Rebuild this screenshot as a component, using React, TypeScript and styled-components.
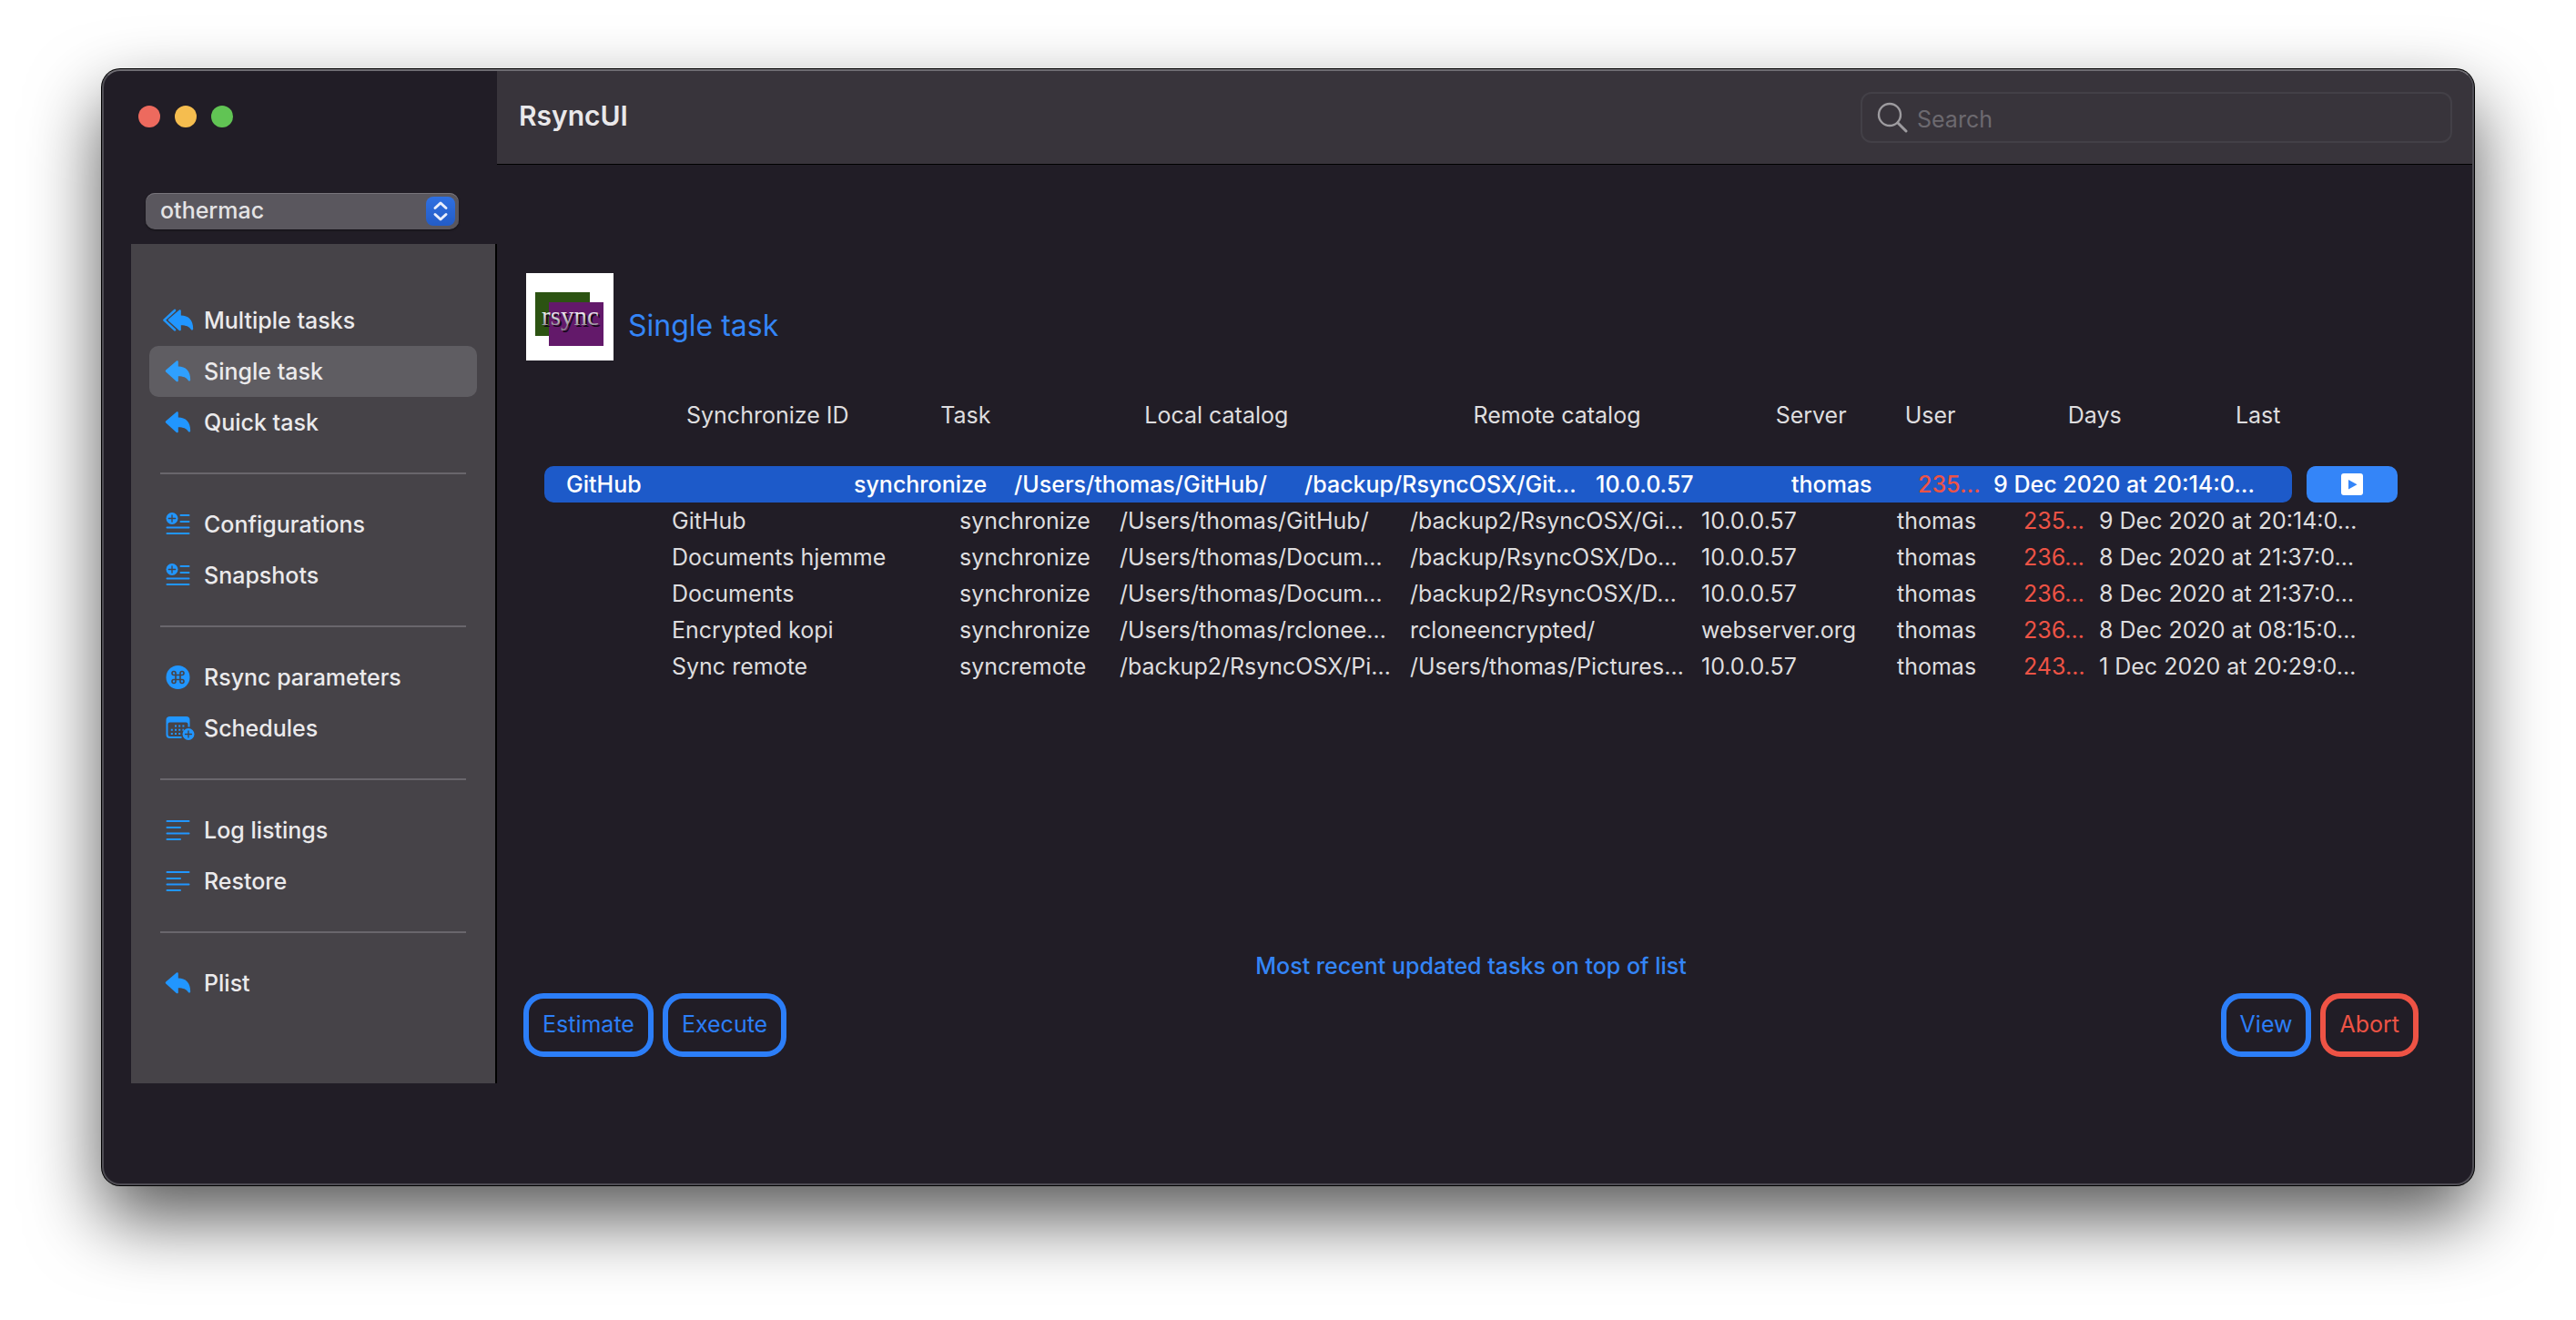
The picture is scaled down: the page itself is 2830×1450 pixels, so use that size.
import React from "react";
import styled, { createGlobalStyle, css } from "styled-components";

const GlobalStyle = createGlobalStyle`
  * { box-sizing: border-box; }
  body {
    margin: 0;
    background: #fff;
    font-family: Inter, "Liberation Sans", sans-serif;
    font-size: 25px;
    line-height: 32px;
    color: #dedddf;
  }
  button, input, select { font: inherit; color: inherit; }
`;

const Desktop = styled.div`
  display: flex;
  min-height: 100vh;
  padding: 76px 112px 148px;
`;

const Window = styled.div`
  flex: 1;
  min-width: 0;
  display: flex;
  background: #211d26;
  border: 2px solid #4f4d54;
  border-top-color: #6f6d73;
  border-radius: 20px;
  box-shadow: 0 0 0 1px #000, 0 36px 80px rgba(0, 0, 0, 0.66);
  overflow: hidden;
`;

const Sidebar = styled.aside`
  flex: none;
  width: 432px;
  display: flex;
  flex-direction: column;
  padding: 38px 0 110px 30px;
  font-weight: 500;
`;

const TrafficLights = styled.div`
  display: flex;
  gap: 16px;
  padding-left: 8px;
`;

const Light = styled.button<{ $color: string }>`
  width: 24px;
  height: 24px;
  padding: 0;
  border: 0;
  border-radius: 50%;
  background: ${(p) => p.$color};
`;

const ProfilePicker = styled.label`
  position: relative;
  display: block;
  margin: 72px 42px 16px 16px;
`;

const ProfileSelect = styled.select`
  appearance: none;
  display: block;
  width: 100%;
  height: 40px;
  padding: 0 40px 2px 16px;
  border: 0;
  border-radius: 10px;
  background: #5a575e;
  box-shadow: inset 0 1px 0 #77747b, 0 1px 2px rgba(0, 0, 0, 0.5);
  color: #e4e3e5;
`;

const PickerArrows = styled.span`
  position: absolute;
  top: 4px;
  right: 4px;
  width: 32px;
  height: 32px;
  border-radius: 8px;
  background: linear-gradient(#2f70e2, #235cc6);
  pointer-events: none;
  svg { display: block; }
`;

const Nav = styled.nav`
  flex: 1;
  padding: 56px 20px;
  background: #464348;
  border-right: 2px solid #000;
`;

const NavItem = styled.a<{ $selected?: boolean }>`
  display: flex;
  align-items: center;
  gap: 7px;
  height: 56px;
  padding-left: 10px;
  border-radius: 10px;
  color: #ebeaec;
  text-decoration: none;
  background: ${(p) => (p.$selected ? "#5f5d62" : "transparent")};
  svg { flex: none; color: ${(p) => (p.$selected ? "#2fa0ff" : "#2196ff")}; }
`;

const Divider = styled.hr`
  height: 2px;
  margin: 27px 12px;
  border: 0;
  background: #69666c;
`;

const Main = styled.main`
  flex: 1;
  min-width: 0;
  display: flex;
  flex-direction: column;
`;

const Toolbar = styled.header`
  display: flex;
  align-items: center;
  justify-content: space-between;
  height: 103px;
  padding: 0 22px 0 24px;
  background: #38343b;
  border-bottom: 1px solid #000;
`;

const AppTitle = styled.h1`
  margin: 0;
  padding-bottom: 4px;
  font-size: 30px;
  line-height: 36px;
  font-weight: 600;
  color: #e9e8ea;
`;

const SearchBox = styled.label`
  flex: 0 1 650px;
  display: flex;
  align-items: center;
  gap: 10px;
  height: 56px;
  padding: 0 16px;
  border: 2px solid #434047;
  border-radius: 12px;
  svg { flex: none; }
`;

const SearchInput = styled.input.attrs({ type: "search" })`
  flex: 1;
  min-width: 0;
  padding: 4px 0 0;
  border: 0;
  outline: 0;
  background: none;
  appearance: none;
  &::placeholder { color: #6c696f; opacity: 1; }
`;

const Content = styled.section`
  flex: 1;
  display: flex;
  flex-direction: column;
  padding: 119px 62px 139px 32px;
`;

const TaskHeading = styled.div`
  display: flex;
  align-items: center;
  gap: 16px;
`;

const TaskTitle = styled.h2`
  margin: 20px 0 0;
  font-size: 32px;
  line-height: 40px;
  font-weight: 400;
  color: #3485f7;
`;

const TaskTable = styled.table`
  display: block;
  margin: 44px 20px 0;
  white-space: nowrap;
  thead, tbody { display: block; }
`;

const HeadRow = styled.tr`
  display: grid;
  grid-template-columns: 279fr 224fr 361fr 332fr 142fr 179fr 184fr 178fr;
  padding-left: 156px;
  margin-bottom: 40px;
`;

const HeadCell = styled.th`
  min-width: 0;
  padding: 0;
  font-weight: 400;
  text-align: left;
`;

const taskColumns = "340fr 176fr 319fr 320fr 215fr 139fr 83fr 328fr";

const Cell = styled.td<{ $overdue?: boolean }>`
  min-width: 0;
  padding: 0;
  line-height: 40px;
  color: ${(p) => (p.$overdue ? "#ee5345" : "inherit")};
  &:first-child { padding-left: 24px; }
`;

const ActionCell = styled.td`
  padding: 0 0 0 16px;
`;

const TaskRow = styled.tr<{ $selected?: boolean }>`
  display: grid;
  height: 40px;
  grid-template-columns: ${taskColumns};
  padding-left: 116px;
  ${(p) => p.$selected && css`
    grid-template-columns: ${taskColumns} 116px;
    padding-left: 0;
    font-weight: 500;
    color: #fff;
    ${Cell} { background: #1d5ac9; }
    ${Cell}:first-child { border-radius: 10px 0 0 10px; }
    ${Cell}:nth-child(8) { border-radius: 0 10px 10px 0; }
  `}
`;

const PlayButton = styled.button`
  display: flex;
  align-items: center;
  justify-content: center;
  width: 100px;
  height: 40px;
  padding: 0;
  border: 0;
  border-radius: 10px;
  background: #3485f8;
`;

const Hint = styled.p`
  margin: auto 0 14px;
  font-weight: 500;
  text-align: center;
  color: #3485f7;
`;

const Actions = styled.div`
  display: flex;
  gap: 10px;
  margin: 0 -3px;
`;

const ActionButton = styled.button<{ $danger?: boolean; $push?: boolean }>`
  height: 70px;
  padding: 0 15px 2px;
  border: 6px solid;
  border-radius: 22px;
  background: none;
  color: ${(p) => (p.$danger ? "#ee5345" : "#2c7ef8")};
  ${(p) => p.$push && css`margin-left: auto;`}
`;

const HEAD = ["Synchronize ID", "Task", "Local catalog", "Remote catalog", "Server", "User", "Days", "Last"];

const TASKS = [
  ["GitHub", "synchronize", "/Users/thomas/GitHub/", "/backup/RsyncOSX/Git…", "10.0.0.57", "thomas", "235…", "9 Dec 2020 at 20:14:0…"],
  ["GitHub", "synchronize", "/Users/thomas/GitHub/", "/backup2/RsyncOSX/Gi…", "10.0.0.57", "thomas", "235…", "9 Dec 2020 at 20:14:0…"],
  ["Documents hjemme", "synchronize", "/Users/thomas/Docum…", "/backup/RsyncOSX/Do…", "10.0.0.57", "thomas", "236…", "8 Dec 2020 at 21:37:0…"],
  ["Documents", "synchronize", "/Users/thomas/Docum…", "/backup2/RsyncOSX/D…", "10.0.0.57", "thomas", "236…", "8 Dec 2020 at 21:37:0…"],
  ["Encrypted kopi", "synchronize", "/Users/thomas/rclonee…", "rcloneencrypted/", "webserver.org", "thomas", "236…", "8 Dec 2020 at 08:15:0…"],
  ["Sync remote", "syncremote", "/backup2/RsyncOSX/Pi…", "/Users/thomas/Pictures…", "10.0.0.57", "thomas", "243…", "1 Dec 2020 at 20:29:0…"],
];

type IconName = "reply" | "replyAll" | "listPlus" | "command" | "calendar" | "lines";

const REPLY =
  "M16.4 6.6c.7-.7 1.9-.2 1.9.8v5.1c8.2.3 13.4 4.6 13.4 14.7 0 1.4-1.6 1.8-2.3.8-2.4-3.5-5.4-4.7-11.1-4.8v5c0 1.1-1.2 1.5-2 .8L4.7 18.4c-.6-.5-.6-1.3 0-1.8z";

function Icon({ name }: { name: IconName }) {
  return (
    <svg width="43" height="36" viewBox="0 0 43 36" fill="currentColor" aria-hidden="true">
      {name === "reply" && <path transform="translate(3.5 0)" d={REPLY} />}
      {name === "replyAll" && (
        <>
          <path transform="translate(6.5 0)" d={REPLY} />
          <path d="M18 7 6.4 17.6 18 28.4" fill="none" stroke="currentColor" strokeWidth="2.6" strokeLinecap="round" strokeLinejoin="round" />
        </>
      )}
      {name === "listPlus" && (
        <>
          <circle cx="15" cy="11.5" r="6.5" />
          <path d="M15 7.8v7.4M11.3 11.5h7.4" stroke="#464348" strokeWidth="1.3" strokeLinecap="round" />
          <path d="M24.5 8h9M24.5 15h9M9.5 21.5h24M9.5 28h24" stroke="currentColor" strokeWidth="2" strokeLinecap="round" />
        </>
      )}
      {name === "command" && (
        <>
          <circle cx="21.5" cy="18" r="13" />
          <path
            d="M19 15.5h5v5h-5zM19 15.5h-2a2 2 0 1 1 2-2zM24 15.5v-2a2 2 0 1 1 2 2zM24 20.5h2a2 2 0 1 1-2 2zM19 20.5v2a2 2 0 1 1-2-2z"
            fill="none" stroke="#464348" strokeWidth="1.6"
          />
        </>
      )}
      {name === "calendar" && (
        <>
          <path d="M12 5h18.5a4 4 0 0 1 4 4v7.500h-2V13.5a2 2 0 0 0-2-2H12.5a2 2 0 0 0-2 2V24.5a2.500 2.500 0 0 0 2.500 2.500H25.5v2H12.500a4 4 0 0 1-4-4V9a4 4 0 0 1 3.500-4z" />
          <path d="M18 14.5h2v2h-2zM22.2 14.5h2v2h-2zM26.4 14.5h2v2h-2zM13.8 18.7h2v2h-2zM18 18.7h2v2h-2zM22.2 18.7h2v2h-2zM26.4 18.7h1.5v2h-1.500zM13.8 22.9h2v2h-2zM18 22.9h2v2h-2zM22.2 22.9h2v2h-2z" />
          <circle cx="33" cy="24.5" r="6.5" />
          <path d="M33 21v7M29.5 24.5h7" stroke="#464348" strokeWidth="1.3" strokeLinecap="round" />
        </>
      )}
      {name === "lines" && (
        <path d="M9.5 8h24M9.5 15h14.5M9.5 21.5h24M9.5 28h14.5" stroke="currentColor" strokeWidth="2" strokeLinecap="round" />
      )}
    </svg>
  );
}

const NAV: { icon: IconName; label: string; selected?: boolean }[][] = [
  [
    { icon: "replyAll", label: "Multiple tasks" },
    { icon: "reply", label: "Single task", selected: true },
    { icon: "reply", label: "Quick task" },
  ],
  [
    { icon: "listPlus", label: "Configurations" },
    { icon: "listPlus", label: "Snapshots" },
  ],
  [
    { icon: "command", label: "Rsync parameters" },
    { icon: "calendar", label: "Schedules" },
  ],
  [
    { icon: "lines", label: "Log listings" },
    { icon: "lines", label: "Restore" },
  ],
  [{ icon: "reply", label: "Plist" }],
];

function RsyncLogo() {
  return (
    <svg width="96" height="96" viewBox="0 0 96 96" role="img" aria-label="rsync">
      <defs>
        <linearGradient id="metal" x1="0" y1="0" x2="0" y2="1">
          <stop offset="0.3" stopColor="#ffffff" />
          <stop offset="0.9" stopColor="#8c8490" />
        </linearGradient>
      </defs>
      <rect width="96" height="96" fill="#fff" />
      <rect x="10" y="21" width="60" height="48" fill="#2c5312" />
      <rect x="25" y="32" width="60" height="48" fill="#63196a" />
      <g fontFamily="Liberation Serif, serif" fontSize="29">
        <text x="19" y="59" fill="#150818">rsync</text>
        <text x="17" y="57" fill="url(#metal)">rsync</text>
      </g>
    </svg>
  );
}

export default function App() {
  return (
    <>
      <GlobalStyle />
      <Desktop>
        <Window>
          <Sidebar>
            <TrafficLights>
              <Light $color="#ed6a5e" aria-label="Close" />
              <Light $color="#f5bd4f" aria-label="Minimize" />
              <Light $color="#61c454" aria-label="Zoom" />
            </TrafficLights>
            <ProfilePicker>
              <ProfileSelect aria-label="Profile" defaultValue="othermac">
                <option>othermac</option>
              </ProfileSelect>
              <PickerArrows>
                <svg width="32" height="32" viewBox="0 0 32 32" fill="none" stroke="#e9eefb" strokeWidth="3" strokeLinecap="round" strokeLinejoin="round">
                  <path d="m10 12.5 6-5.5 6 5.5M10 19.5l6 5.500 6-5.500" />
                </svg>
              </PickerArrows>
            </ProfilePicker>
            <Nav>
              {NAV.map((group, i) => (
                <React.Fragment key={i}>
                  {i > 0 && <Divider />}
                  {group.map((item) => (
                    <NavItem key={item.label} href="#" $selected={item.selected}>
                      <Icon name={item.icon} />
                      {item.label}
                    </NavItem>
                  ))}
                </React.Fragment>
              ))}
            </Nav>
          </Sidebar>
          <Main>
            <Toolbar>
              <AppTitle>RsyncUI</AppTitle>
              <SearchBox>
                <svg width="34" height="34" viewBox="0 0 34 34" fill="none" stroke="#9d9b9f" strokeLinecap="round" aria-hidden="true">
                  <circle cx="14" cy="14" r="12" strokeWidth="2.4" />
                  <path d="m23 23 9 9" strokeWidth="3" />
                </svg>
                <SearchInput placeholder="Search" aria-label="Search" />
              </SearchBox>
            </Toolbar>
            <Content>
              <TaskHeading>
                <RsyncLogo />
                <TaskTitle>Single task</TaskTitle>
              </TaskHeading>
              <TaskTable>
                <thead>
                  <HeadRow>
                    {HEAD.map((label) => (
                      <HeadCell key={label} scope="col">{label}</HeadCell>
                    ))}
                  </HeadRow>
                </thead>
                <tbody>
                  {TASKS.map((task, row) => (
                    <TaskRow key={row} $selected={row === 0}>
                      {task.map((value, col) => (
                        <Cell key={col} $overdue={col === 6}>{value}</Cell>
                      ))}
                      {row === 0 && (
                        <ActionCell>
                          <PlayButton aria-label="Run task">
                            <svg width="24" height="24" viewBox="0 0 24 24" aria-hidden="true">
                              <rect width="24" height="24" rx="3" fill="#fff" />
                              <path d="M8 7v10.5l9.5-5.25z" fill="#3485f8" />
                            </svg>
                          </PlayButton>
                        </ActionCell>
                      )}
                    </TaskRow>
                  ))}
                </tbody>
              </TaskTable>
              <Hint>Most recent updated tasks on top of list</Hint>
              <Actions>
                <ActionButton>Estimate</ActionButton>
                <ActionButton>Execute</ActionButton>
                <ActionButton $push>View</ActionButton>
                <ActionButton $danger>Abort</ActionButton>
              </Actions>
            </Content>
          </Main>
        </Window>
      </Desktop>
    </>
  );
}
